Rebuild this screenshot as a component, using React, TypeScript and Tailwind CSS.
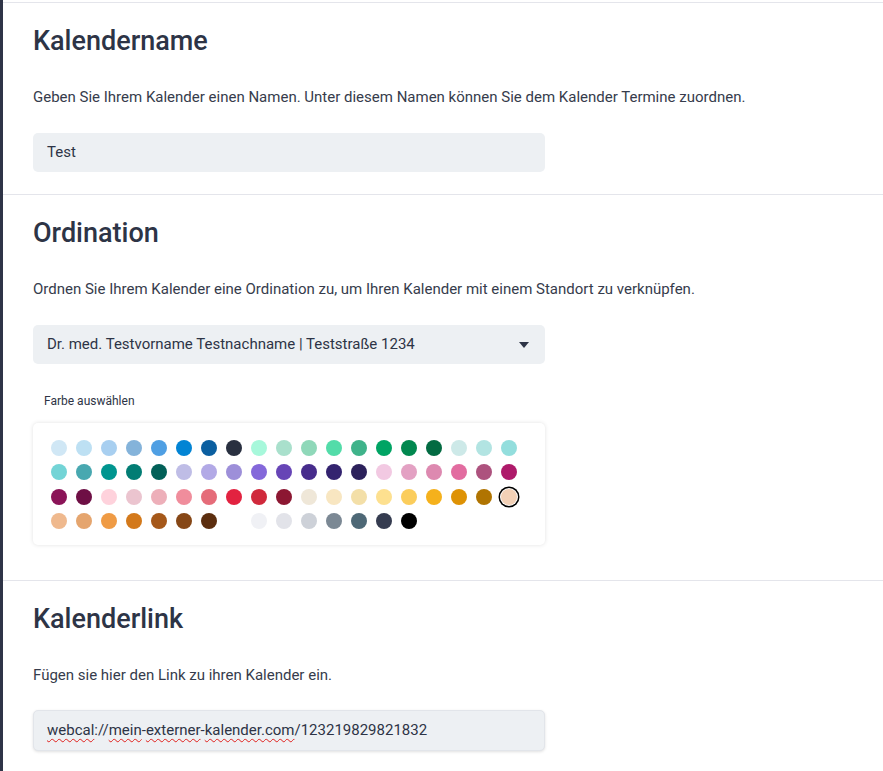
const swatches: string[][] = [
  ['#d0e7f5', '#bde0f3', '#a8cff0', '#84b3da', '#4f9fe3', '#0284d4', '#0b5fa0', '#293040', '#a7f8db', '#a9e0cc', '#8fd8b9', '#53dca9', '#3fb38a', '#00a464', '#02884f', '#036b42', '#cde9e8', '#b2e4e2', '#93dedd'],
  ['#73d4d6', '#48a8b0', '#00958f', '#027d74', '#026058', '#bfbde6', '#b2a9e6', '#9d8fd9', '#8468da', '#6745b6', '#472c8c', '#33236f', '#2c215b', '#f2c9e2', '#e3a1c3', '#dd89b0', '#e26ca0', '#ad527e', '#ae1a6a'],
  ['#8b1458', '#6e0f45', '#fed2dc', '#ebc4cf', '#edafb9', '#f08d9c', '#e56c79', '#e22240', '#d0293c', '#8c1732', '#efe7d8', '#f8e6c1', '#f3dfa8', '#fde08f', '#fbcd5c', '#f5b11c', '#de9205', '#b07401', '#f2d0b6'],
  ['#efb98e', '#e5a56e', '#ef9b45', '#d3791b', '#a5581a', '#864716', '#5c2e0f', '#ffffff', '#f0f1f5', '#e2e3e9', '#cdd1d8', '#7b8894', '#4e6876', '#353c50', '#000000'],
];

const selected = '#f2d0b6';

function Section({ title, text, children }: { title: string; text: string; children: React.ReactNode }) {
  return (
    <section className="border-t border-[#e4e5eb] pl-[30px] pt-[22px] pb-[22px]">
      <h2 className="text-[27px] leading-[32px] font-medium text-[#2d3446]">{title}</h2>
      <p className="mt-[30px] text-[15px] leading-[21px] text-[#363c4c]">{text}</p>
      <div className="mt-[25px]">{children}</div>
    </section>
  );
}

function Squiggle({ children }: { children: React.ReactNode }) {
  return <span className="underline decoration-wavy decoration-[#e0201c] decoration-[1px] underline-offset-[3px]">{children}</span>;
}

export default function App() {
  return (
    <div className="min-h-[771px] w-[883px] bg-white border-l-[3px] border-[#2f3447] pt-[2px] font-['Roboto',sans-serif] overflow-hidden">
      <Section title="Kalendername" text="Geben Sie Ihrem Kalender einen Namen. Unter diesem Namen können Sie dem Kalender Termine zuordnen.">
        <div className="w-[512px] h-[39px] rounded-[5px] bg-[#edf0f3] pl-[14px] flex items-center text-[15px] text-[#2d3446]">
          Test
        </div>
      </Section>

      <section className="border-t border-[#e4e5eb] pl-[30px] pt-[22px] pb-[35px]">
        <h2 className="text-[27px] leading-[32px] font-medium text-[#2d3446]">Ordination</h2>
        <p className="mt-[30px] text-[15px] leading-[21px] text-[#363c4c]">
          Ordnen Sie Ihrem Kalender eine Ordination zu, um Ihren Kalender mit einem Standort zu verknüpfen.
        </p>
        <div className="mt-[25px] w-[512px] h-[39px] rounded-[5px] bg-[#edf0f3] pl-[14px] pr-[16px] flex items-center justify-between text-[15px] text-[#2d3446]">
          <span>Dr. med. Testvorname Testnachname | Teststraße 1234</span>
          <svg width="10" height="6" viewBox="0 0 10 6">
            <path d="M0 0h10L5 6z" fill="#2d3446" />
          </svg>
        </div>
        <div className="mt-[29px] pl-[11px] text-[12px] leading-[16px] text-[#2d3446]">Farbe auswählen</div>
        <div className="mt-[14px] w-[512px] rounded-[5px] bg-white shadow-[0_0_4px_rgba(0,0,0,0.12)] pl-[18px] pt-[17px] pb-[16px] flex flex-col gap-y-[8.4px]">
          {swatches.map((row, r) => (
            <div key={r} className="flex gap-x-[9px]">
              {row.map((c, i) => (
                <span
                  key={i}
                  className={`block w-4 h-4 rounded-full ${c === selected ? 'ring-[1.5px] ring-black ring-offset-[1px] ring-offset-white' : ''}`}
                  style={{ backgroundColor: c }}
                />
              ))}
            </div>
          ))}
        </div>
      </section>

      <Section title="Kalenderlink" text="Fügen sie hier den Link zu ihren Kalender ein.">
        <div className="-mt-px w-[512px] h-[41px] rounded-[5px] bg-[#edf0f3] border border-[#e2e5ea] shadow-[0_1px_3px_rgba(0,0,0,0.12)] pl-[13px] flex items-center text-[15px] text-[#2d3446]">
          <span>
            <Squiggle>webcal</Squiggle>://<Squiggle>mein</Squiggle>-<Squiggle>externer</Squiggle>-<Squiggle>kalender.com</Squiggle>/123219829821832
          </span>
        </div>
      </Section>
    </div>
  );
}
